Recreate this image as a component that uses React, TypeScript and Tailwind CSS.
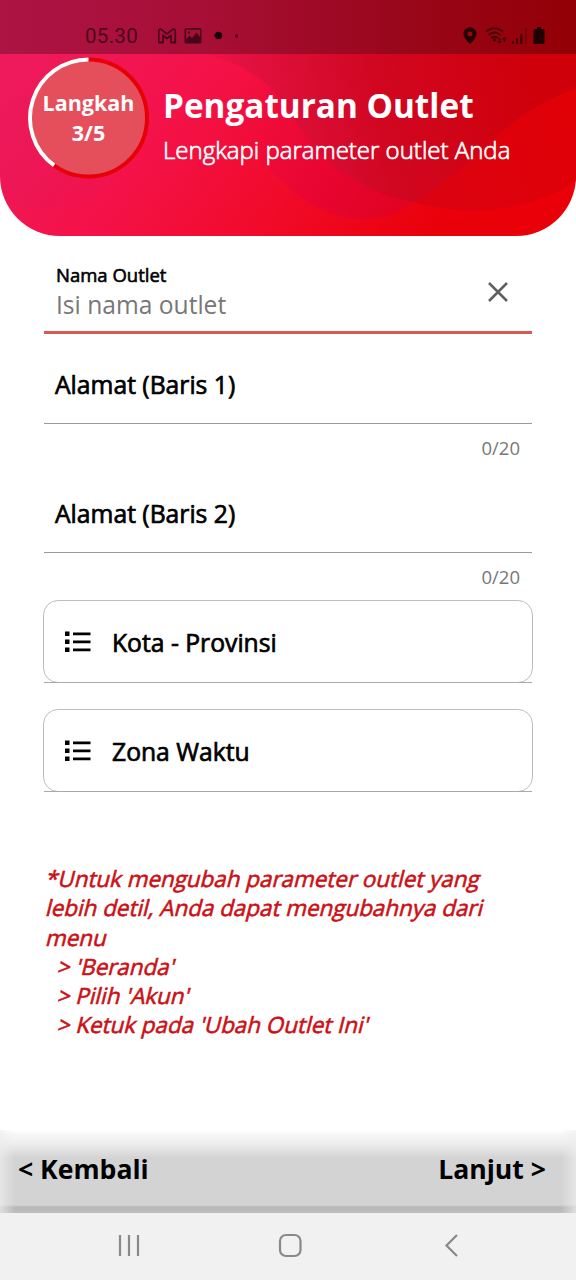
import React from 'react';

function StatusBar() {
  return (
    <div className="relative flex h-[54px] items-center justify-between bg-black/28 pl-[85px] pr-[31px] pt-[17px] text-[#2a0010]/75">
      <div className="flex items-center">
        <span className="w-[73px] pt-[1px] font-[Roboto] text-[20.5px] leading-6 tracking-[0.3px]">05.30</span>
        <svg className="h-[16px] w-[80px]" viewBox="0 0 80 16">
          <path d="M0.7 14.5V3.5Q0.7 0.3 3.6 1.6L9 6L14.4 1.6Q17.3 0.3 17.3 3.5V14.5H13V7.2L9 10.5L5 7.2V14.5Z" fill="none" stroke="currentColor" strokeWidth="1.8" strokeLinejoin="round" />
          <path fillRule="evenodd" fill="currentColor" d="M28 0H42Q43.5 0 43.5 1.5V14Q43.5 15.500 42 15.500H28Q26.500 15.500 26.500 14V1.500Q26.500 0 28 0ZM28.200 1.700V11L31.500 7.500L34 10L38.500 4.500L42 9V1.700ZM30 3.500H32V5.500H30Z" />
          <circle cx="60.500" cy="7.500" r="3.700" fill="#19000a" />
          <path d="M55.500 7.500L58 6L58 9Z" fill="#19000a" />
          <circle cx="78.500" cy="8" r="1.700" fill="currentColor" />
        </svg>
      </div>
      <svg className="h-[18px] w-[82px] text-[#200000]" viewBox="0 0 82 18">
        <path fillRule="evenodd" fill="currentColor" d="M7 .5C3.200 .5 .500 3 .500 6.700C.500 11 7 17 7 17S13.500 11 13.500 6.700C13.500 3 10.800 .5 7 .5ZM7 4.200A2.600 2.600 0 1 1 7 9.400A2.600 2.600 0 1 1 7 4.200Z" />
        <g className="opacity-65" fill="none" stroke="currentColor" strokeWidth="1.900">
          <path d="M23 4.500Q31.500 -2 40 4.500M25.500 8Q31.500 3.200 37.500 8M28 11Q31.500 8.500 35 11" />
          <path d="M36.500 11V16M34.500 14L36.500 16L38.500 14M41.500 15V10M39.500 12.500L41.500 10.500L43.500 12.500" strokeWidth="1.500" />
          <circle cx="31.500" cy="13" r=".8" />
        </g>
        <g fill="currentColor" className="opacity-65">
          <path d="M49 14H51V17H49ZM53 11H55V17H53ZM57 7H59.500V17H57Z" /><path d="M62 1H64V17H62Z" opacity=".4" />
        </g>
        <path fill="currentColor" d="M72.500 2H74V0H78V2H80Q81.500 2 81.500 3.500V15.500Q81.500 17 80 17H72Q70.500 17 70.500 15.500V3.500Q70.500 2 72.500 2Z" />
      </svg>
    </div>
  );
}

function HeaderArt() {
  return (
    <svg className="absolute inset-0 h-full w-full" viewBox="0 0 576 236" preserveAspectRatio="none">
      <defs>
        <linearGradient id="base" gradientUnits="userSpaceOnUse" x1="60" y1="20" x2="400" y2="280">
          <stop offset="0" stopColor="#ee1a5c" /><stop offset=".33" stopColor="#f4124a" /><stop offset=".68" stopColor="#f10a28" /><stop offset="1" stopColor="#ea0009" />
        </linearGradient>
        <linearGradient id="upper" gradientUnits="userSpaceOnUse" x1="170" y1="90" x2="530" y2="30">
          <stop offset="0" stopColor="#f01450" stopOpacity="0" /><stop offset=".22" stopColor="#e11140" /><stop offset=".55" stopColor="#d10722" /><stop offset="1" stopColor="#cf000a" />
        </linearGradient>
        <linearGradient id="sky" x1="0" y1="0" x2="1" y2="0">
          <stop offset="0" stopColor="#f01c60" /><stop offset=".35" stopColor="#e8154b" /><stop offset=".7" stopColor="#d40a25" /><stop offset="1" stopColor="#cc0008" />
        </linearGradient>
        <linearGradient id="lobe" gradientUnits="userSpaceOnUse" x1="230" y1="120" x2="400" y2="200">
          <stop offset="0" stopColor="#e80b45" stopOpacity="0" /><stop offset=".5" stopColor="#e70538" /><stop offset="1" stopColor="#de0226" />
        </linearGradient>
        <linearGradient id="right" gradientUnits="userSpaceOnUse" x1="400" y1="190" x2="576" y2="130">
          <stop offset="0" stopColor="#da0313" /><stop offset="1" stopColor="#e00006" />
        </linearGradient>
      </defs>
      <path d="M0 0H576V236H0Z" fill="url(#base)" />
      <path d="M0 108C30 85 70 90 115 120C150 155 105 206 60 208C35 209 15 207 0 202Z" fill="#e01660" opacity=".16" />
      <path d="M414 202C390 221 355 224 325 211C285 195 260 155 225 125L200 56L290 90Z" fill="url(#lobe)" opacity=".75" />
      <path d="M0 0H576V89C500 114 474 171 414 202C378 196 340 177 316 149C281 111 285 75 200 52L0 52Z" fill="url(#upper)" />
      <path d="M414 202C475 169 500 116 576 88V181C535 210 466 218 414 202Z" fill="url(#right)" />
      <path d="M0 0H576V54H0Z" fill="url(#sky)" />
    </svg>
  );
}

function Header() {
  return (
    <header className="relative h-[236px] overflow-hidden rounded-b-[60px]">
      <HeaderArt />
      <StatusBar />
      <div className="relative flex pl-[27px] text-white">
        <div className="relative mt-[3px] flex h-[122px] w-[122px] shrink-0 flex-col items-center justify-center text-center text-[21.5px] font-bold leading-[30px]">
          <svg className="absolute inset-0 h-full w-full" viewBox="0 0 122 122">
            <circle cx="61.500" cy="61" r="58.500" fill="#e54f5b" stroke="#e60008" strokeWidth="4" />
            <path d="M61.500 2.500A58.500 58.500 0 0 0 27.100 108.300" fill="none" stroke="white" strokeWidth="4" />
          </svg>
          <span className="relative pl-px">Langkah</span>
          <span className="relative pl-px">3/5</span>
        </div>
        <div className="ml-[14px] mt-[29px] whitespace-nowrap">
          <h1 className="text-[33.3px] font-bold leading-[45px]">Pengaturan Outlet</h1>
          <p className="mt-[4px] text-[24px] font-light leading-[36px] [-webkit-text-stroke:0.7px_white]">Lengkapi parameter outlet Anda</p>
        </div>
      </div>
    </header>
  );
}

function AddressField({ label }: { label: string }) {
  return (
    <div className="h-[129px] pt-[33px]">
      <div className="h-[57px] border-b-[1.500px] border-[#999] pl-[11px] text-[24.7px] leading-[36px] [-webkit-text-stroke:0.7px_black]">{label}</div>
      <div className="mt-[11px] pr-[12px] text-right text-[18.500px] leading-[25px] text-[#777]">0/20</div>
    </div>
  );
}

function Picker({ label }: { label: string }) {
  return (
    <div className="relative -mx-px flex h-[83px] items-center rounded-[15px] border-[1.500px] border-[#bdbdbd] pl-[20px]">
      <div className="absolute inset-x-0 -bottom-px h-px bg-[#aaa]" />
      <svg className="h-[22px] w-[27px]" viewBox="0 0 27 22">
        <path d="M1 .5H5.500V5H1ZM1 8.500H5.500V13H1ZM1 16.500H5.500V21H1ZM9 1.500H26.500V4.200H9ZM9 9.500H26.500V12.200H9ZM9 17.500H26.500V20.200H9Z" />
      </svg>
      <span className="ml-[21px] pt-[3px] text-[24.700px] leading-[36px] [-webkit-text-stroke:0.7px_black]">{label}</span>
    </div>
  );
}

const noteLines = [
  '*Untuk mengubah parameter outlet yang',
  'lebih detil, Anda dapat mengubahnya dari',
  'menu',
  "  > 'Beranda'",
  "  > Pilih 'Akun'",
  "  > Ketuk pada 'Ubah Outlet Ini'",
];

export default function App() {
  return (
    <div className="flex h-[1280px] w-[576px] flex-col overflow-hidden bg-white font-['Open_Sans',sans-serif] text-black">
      <Header />
      <main className="flex flex-1 flex-col px-[44px]">
        <section className="flex h-[98px] justify-between border-b-[3px] border-[#d75b53] pl-[12px] pr-[22px] pt-[26px]">
          <div>
            <div className="text-[18.500px] leading-[25px] [-webkit-text-stroke:0.6px_black]">Nama Outlet</div>
            <div className="text-[24.6px] leading-[36px] text-[#777]">Isi nama outlet</div>
          </div>
          <svg className="mt-[19px] h-[22px] w-[24px]" viewBox="0 0 24 22"><path d="M3 2L21 20M21 2L3 20" fill="none" stroke="#606060" strokeWidth="2.500" /></svg>
        </section>
        <AddressField label="Alamat (Baris 1)" />
        <AddressField label="Alamat (Baris 2)" />
        <div className="mt-[8px] flex flex-col gap-[26px]">
          <Picker label="Kota - Provinsi" />
          <Picker label="Zona Waktu" />
        </div>
        <div className="mt-[72px] whitespace-pre pl-px text-[22.4px] leading-[29.300px] text-[#cb1116] [-webkit-text-stroke:0.6px_#cb1116]">
          {noteLines.map((line) => (
            <div key={line} className="origin-[0_22px] skew-x-[-14deg]">{line}</div>
          ))}
        </div>
      </main>
      <footer className="relative flex h-[83px] items-center justify-between bg-[linear-gradient(to_bottom,#fff_0,#f5f5f5_6px,#ededed_14px,#d3d3d3_28px,#d3d3d3_75px,#b8b8b8_77px,#bdbdbd_83px)] pl-[18px] pr-[30px] text-[26.6px] font-bold leading-[36px]">
        <div className="absolute inset-0 bg-[linear-gradient(to_right,#eeeeee_0,#eeeeee00_15px,#eeeeee00_561px,#eeeeee_576px)] opacity-70" />
        <button className="relative -mt-[5px]">&lt; Kembali</button>
        <button className="relative -mt-[5px]">Lanjut &gt;</button>
      </footer>
      <nav className="h-[67px] bg-[#f1f1f1]">
        <svg className="h-full w-full" viewBox="0 0 576 67" fill="none" stroke="#898989">
          <path d="M120 22V43M129 22V43M138 22V43" strokeWidth="2.200" />
          <rect x="280" y="22" width="20.500" height="21" rx="6" strokeWidth="2.200" />
          <path d="M457 22L446.500 32.500L457 43" strokeWidth="2.200" />
        </svg>
      </nav>
    </div>
  );
}
